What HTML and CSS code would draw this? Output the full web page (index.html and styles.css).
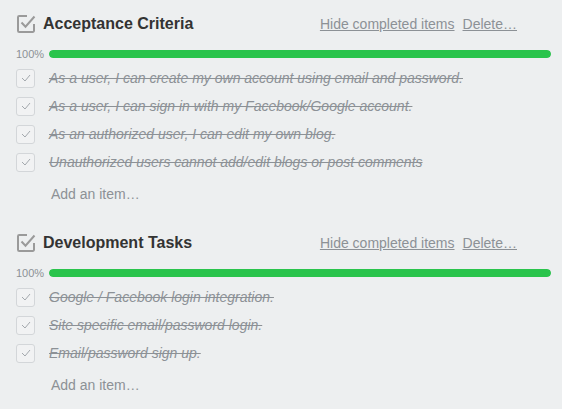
FILE: index.html
```html
<!DOCTYPE html>
<html>
<head>
<meta charset="utf-8">
<link rel="stylesheet" href="styles.css">
</head>
<body>
<div class="checklists">
  <section class="checklist">
    <div class="cl-header">
      <svg class="cl-icon" width="20" height="20" viewBox="0 0 20 20"><path d="M11 2H3.2a1.2 1.2 0 0 0-1.2 1.2v13.6A1.2 1.2 0 0 0 3.2 18h13.6a1.2 1.2 0 0 0 1.2-1.2V10" fill="none" stroke="#9a9a9a" stroke-width="2"/><path d="M5.5 8.5l4 4.2L18.5 2.5" fill="none" stroke="#9a9a9a" stroke-width="2"/></svg>
      <h3 class="cl-title">Acceptance Criteria</h3>
      <div class="cl-actions"><a class="cl-link">Hide completed items</a><a class="cl-link">Delete…</a></div>
    </div>
    <div class="cl-progress"><span class="pct">100%</span><div class="bar"><div class="bar-fill" style="width:100%"></div></div></div>
    <ul class="items">
      <li class="item"><span class="box"><svg width="10" height="8" viewBox="0 0 10 8"><path d="M1 4l3 3 5-6" fill="none" stroke="#a3a8ad" stroke-width="1"/></svg></span><span class="item-text">As a user, I can create my own account using email and password.</span></li>
      <li class="item"><span class="box"><svg width="10" height="8" viewBox="0 0 10 8"><path d="M1 4l3 3 5-6" fill="none" stroke="#a3a8ad" stroke-width="1"/></svg></span><span class="item-text">As a user, I can sign in with my Facebook/Google account.</span></li>
      <li class="item"><span class="box"><svg width="10" height="8" viewBox="0 0 10 8"><path d="M1 4l3 3 5-6" fill="none" stroke="#a3a8ad" stroke-width="1"/></svg></span><span class="item-text">As an authorized user, I can edit my own blog.</span></li>
      <li class="item"><span class="box"><svg width="10" height="8" viewBox="0 0 10 8"><path d="M1 4l3 3 5-6" fill="none" stroke="#a3a8ad" stroke-width="1"/></svg></span><span class="item-text">Unauthorized users cannot add/edit blogs or post comments</span></li>
    </ul>
    <div class="add-item">Add an item…</div>
  </section>
  <section class="checklist">
    <div class="cl-header">
      <svg class="cl-icon" width="20" height="20" viewBox="0 0 20 20"><path d="M11 2H3.2a1.2 1.2 0 0 0-1.2 1.2v13.6A1.2 1.2 0 0 0 3.2 18h13.6a1.2 1.2 0 0 0 1.2-1.2V10" fill="none" stroke="#9a9a9a" stroke-width="2"/><path d="M5.5 8.5l4 4.2L18.5 2.5" fill="none" stroke="#9a9a9a" stroke-width="2"/></svg>
      <h3 class="cl-title">Development Tasks</h3>
      <div class="cl-actions"><a class="cl-link">Hide completed items</a><a class="cl-link">Delete…</a></div>
    </div>
    <div class="cl-progress"><span class="pct">100%</span><div class="bar"><div class="bar-fill" style="width:100%"></div></div></div>
    <ul class="items">
      <li class="item"><span class="box"><svg width="10" height="8" viewBox="0 0 10 8"><path d="M1 4l3 3 5-6" fill="none" stroke="#a3a8ad" stroke-width="1"/></svg></span><span class="item-text">Google / Facebook login integration.</span></li>
      <li class="item"><span class="box"><svg width="10" height="8" viewBox="0 0 10 8"><path d="M1 4l3 3 5-6" fill="none" stroke="#a3a8ad" stroke-width="1"/></svg></span><span class="item-text">Site specific email/password login.</span></li>
      <li class="item"><span class="box"><svg width="10" height="8" viewBox="0 0 10 8"><path d="M1 4l3 3 5-6" fill="none" stroke="#a3a8ad" stroke-width="1"/></svg></span><span class="item-text">Email/password sign up.</span></li>
    </ul>
    <div class="add-item">Add an item…</div>
  </section>
</div>
</body>
</html>
```
FILE: styles.css
```css
html, body {
  margin: 0;
  padding: 0;
  background: #edeff0;
  font-family: "Liberation Sans", Arial, sans-serif;
}
.checklists {
  width: 562px;
  height: 409px;
  overflow: hidden;
}
.checklist {
  padding: 12px 11px 11px 16px;
}
.cl-header {
  display: flex;
  align-items: center;
  height: 24px;
}
.cl-icon {
  display: block;
  flex: none;
  margin-right: 7px;
}
.cl-title {
  margin: 0;
  font-size: 16px;
  font-weight: bold;
  color: #333;
  flex: 1;
}
.cl-actions {
  display: flex;
  gap: 8px;
  margin-right: 34px;
}
.cl-link {
  font-size: 14px;
  color: #8c9196;
  text-decoration: underline;
}
.cl-progress {
  display: flex;
  align-items: center;
  height: 12px;
  margin-top: 12px;
}
.pct {
  width: 33px;
  flex: none;
  font-size: 11px;
  color: #8c9196;
}
.bar {
  flex: 1;
  height: 8px;
  border-radius: 4px;
  background: #dfe2e5;
  overflow: hidden;
}
.bar-fill {
  height: 100%;
  background: #2ac44c;
  border-radius: 4px;
}
.items {
  list-style: none;
  margin: 4px 0 0;
  padding: 0;
}
.item {
  display: flex;
  align-items: center;
  height: 28px;
}
.box {
  box-sizing: border-box;
  width: 19px;
  height: 19px;
  flex: none;
  margin-right: 14px;
  border: 1px solid #d3d6d9;
  border-radius: 3px;
  background: #f1f2f3;
  display: flex;
  align-items: center;
  justify-content: center;
}
.item-text {
  font-size: 14px;
  font-style: italic;
  color: #8c9196;
  text-decoration: line-through;
}
.add-item {
  margin-top: 4px;
  height: 28px;
  line-height: 28px;
  padding-left: 35px;
  font-size: 14px;
  color: #8c9196;
}
```
